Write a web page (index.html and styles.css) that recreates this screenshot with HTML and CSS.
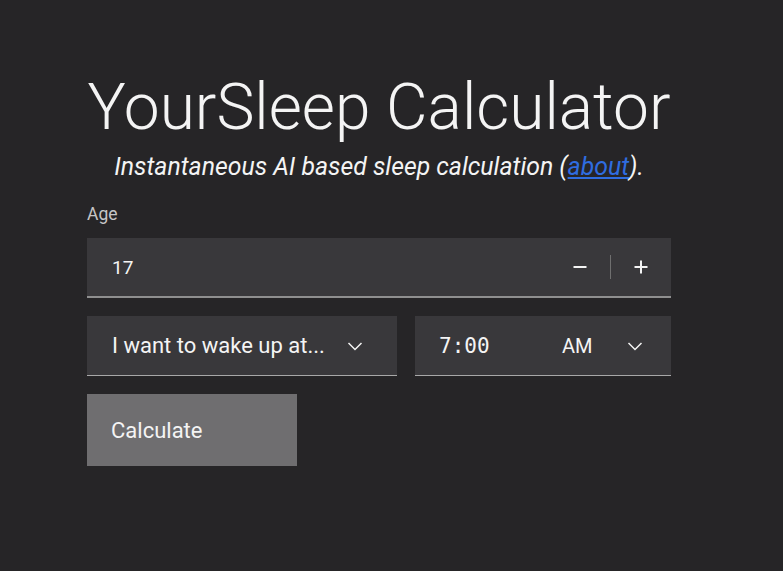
FILE: index.html
```html
<!DOCTYPE html>
<html lang="en">
<head>
<meta charset="utf-8">
<title>YourSleep Calculator</title>
<link rel="stylesheet" href="styles.css">
</head>
<body>
<main class="app">
  <h1 class="title">YourSleep Calculator</h1>
  <p class="subtitle">Instantaneous AI based sleep calculation (<a href="#" class="link">about</a>).</p>
  <div class="field">
    <label class="label">Age</label>
    <div class="number">
      <span class="number-value">17</span>
      <div class="number-controls">
        <button class="step" aria-label="decrement">
          <svg width="16" height="16" viewBox="0 0 16 16"><path d="M1.5 8h13" stroke="#f4f4f4" stroke-width="2"/></svg>
        </button>
        <span class="step-divider"></span>
        <button class="step" aria-label="increment">
          <svg width="16" height="16" viewBox="0 0 16 16"><path d="M1.5 8h13M8 1.5v13" stroke="#f4f4f4" stroke-width="2"/></svg>
        </button>
      </div>
    </div>
  </div>
  <div class="row">
    <div class="select">
      <span class="select-text">I want to wake up at...</span>
      <svg class="chev" width="16" height="16" viewBox="0 0 16 16"><path d="M1.5 5l6.5 6.5 6.5-6.5" fill="none" stroke="#f4f4f4" stroke-width="1.5"/></svg>
    </div>
    <div class="time">
      <span class="time-value">7:00</span>
      <span class="ampm">AM</span>
      <svg class="chev" width="16" height="16" viewBox="0 0 16 16"><path d="M1.5 5l6.5 6.5 6.5-6.5" fill="none" stroke="#f4f4f4" stroke-width="1.5"/></svg>
    </div>
  </div>
  <button class="calc">Calculate</button>
</main>
</body>
</html>
```
FILE: styles.css
```css
html, body {
  margin: 0;
  padding: 0;
  background: #262527;
  color: #f4f4f4;
  font-family: Roboto, "Noto Sans", sans-serif;
}
.app {
  width: 584px;
  margin-left: 87px;
  padding-top: 70px;
  display: flex;
  flex-direction: column;
}
.title {
  margin: 0;
  font-weight: 300;
  font-size: 64px;
  line-height: 76px;
  text-align: center;
  color: #f4f4f4;
}
.subtitle {
  margin: 6px 0 0;
  font-style: italic;
  font-size: 24.8px;
  line-height: 30px;
  text-align: center;
  color: #f4f4f4;
}
.link {
  color: #2f6de0;
}
.field {
  margin-top: 22px;
  display: flex;
  flex-direction: column;
}
.label {
  font-size: 17.5px;
  line-height: 20px;
  color: #c6c6c6;
  margin-bottom: 14px;
}
.number {
  height: 58px;
  background: #39383b;
  border-bottom: 2px solid #8f8f8f;
  display: flex;
  align-items: center;
  justify-content: space-between;
  padding-left: 25px;
}
.number-value {
  font-size: 19px;
}
.number-controls {
  display: flex;
  align-items: center;
  height: 100%;
}
.step {
  width: 60px;
  height: 100%;
  background: none;
  border: 0;
  padding: 0;
  display: flex;
  align-items: center;
  justify-content: center;
}
.step-divider {
  width: 1px;
  height: 24px;
  background: #6f6f6f;
}
.row {
  margin-top: 18px;
  display: flex;
  gap: 18px;
}
.select, .time {
  height: 60px;
  background: #39383b;
  border-bottom: 1px solid #a8a8a8;
  display: flex;
  align-items: center;
  box-sizing: border-box;
}
.select {
  width: 310px;
  padding: 0 34px 0 25px;
  justify-content: space-between;
}
.select-text {
  font-size: 22px;
}
.time {
  flex: 1;
  padding: 0 28px 0 24px;
}
.time-value {
  font-family: "DejaVu Sans Mono", monospace;
  font-size: 21px;
  width: 123px;
}
.ampm {
  font-size: 20px;
  flex: 1;
}
.calc {
  margin-top: 18px;
  width: 210px;
  height: 72px;
  background: #6f6e70;
  border: 0;
  color: #f4f4f4;
  font-family: Roboto, "Noto Sans", sans-serif;
  font-size: 22px;
  text-align: left;
  padding: 0 0 0 24px;
}
```
